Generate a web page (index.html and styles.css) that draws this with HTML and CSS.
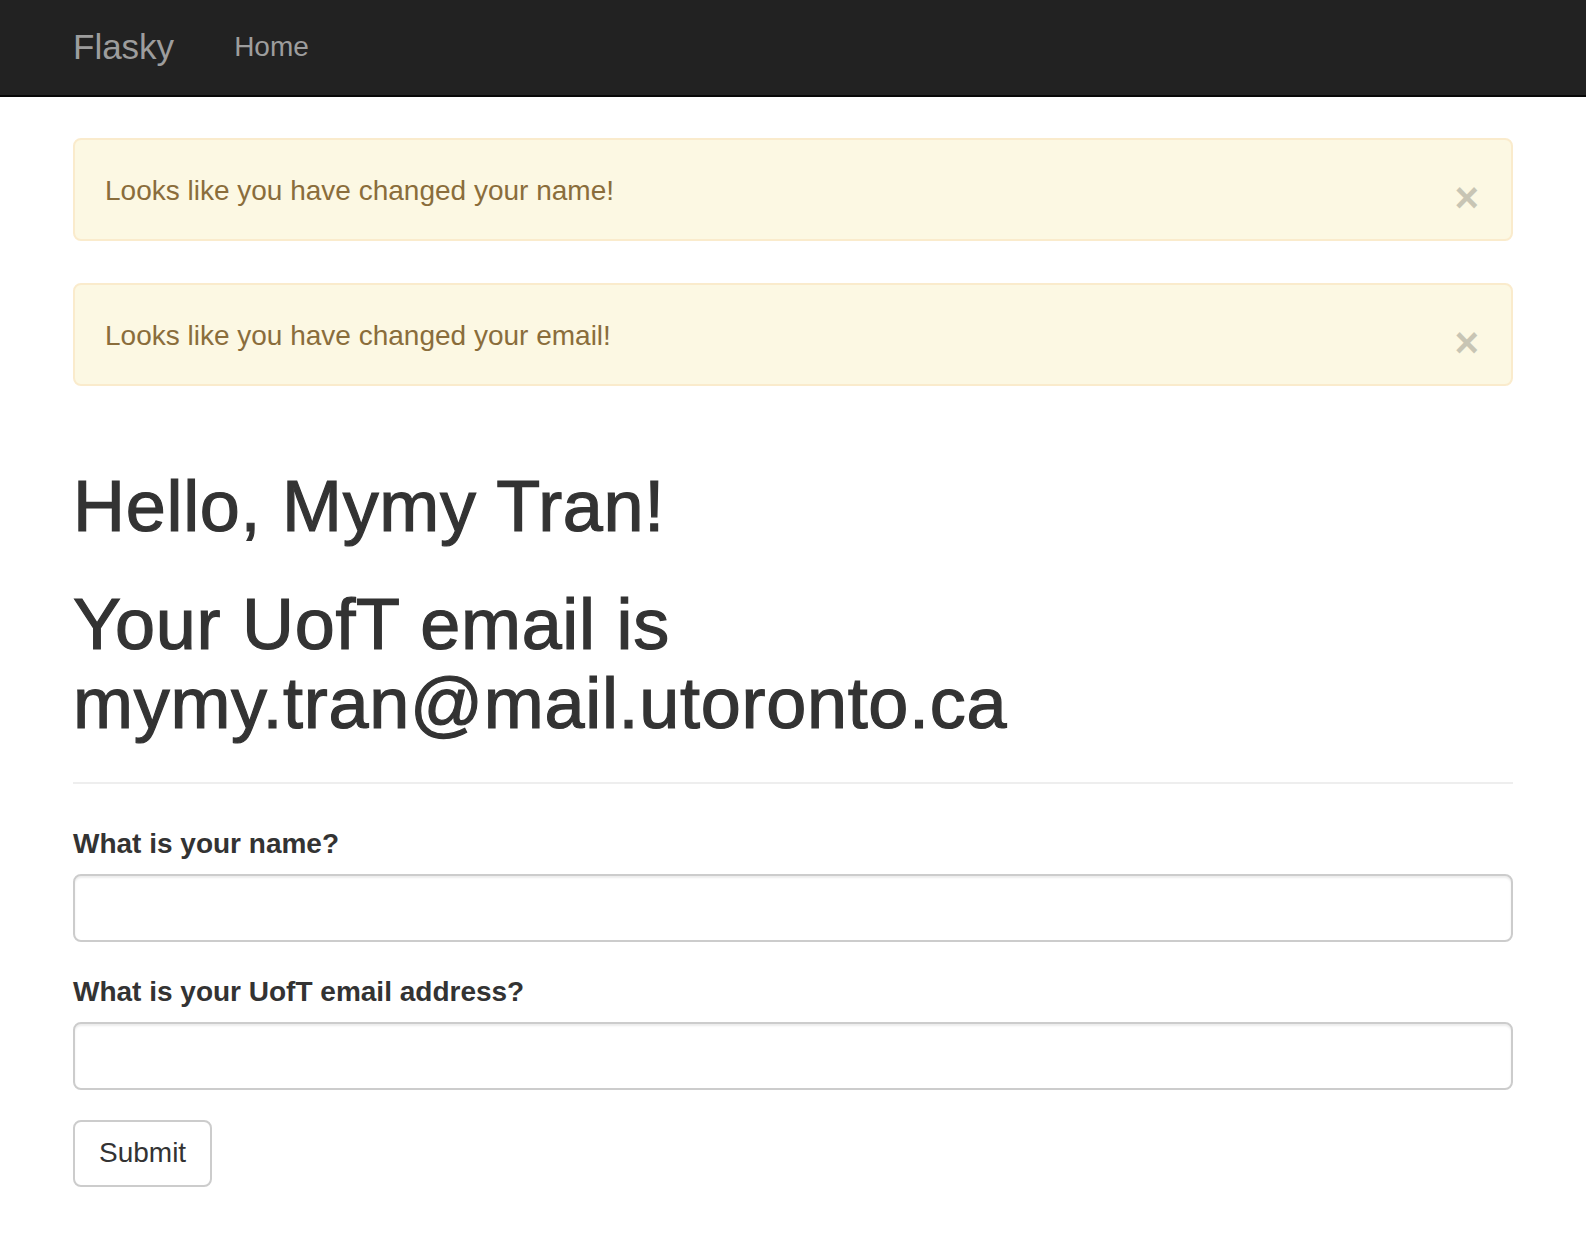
FILE: index.html
```
<!DOCTYPE html>
<html lang="en">
<head>
<meta charset="utf-8">
<title>Flasky</title>
<link rel="stylesheet" href="styles.css">
</head>
<body>
<nav class="navbar">
  <div class="container navbar-inner">
    <a class="navbar-brand" href="#">Flasky</a>
    <a class="nav-link" href="#">Home</a>
  </div>
</nav>
<main class="container">
  <div class="alert">
    <span class="alert-text">Looks like you have changed your name!</span>
    <button class="close" type="button">&times;</button>
  </div>
  <div class="alert">
    <span class="alert-text">Looks like you have changed your email!</span>
    <button class="close" type="button">&times;</button>
  </div>
  <div class="page-header">
    <h1>Hello, Mymy Tran!</h1>
    <h1>Your UofT email is mymy.tran@mail.utoronto.ca</h1>
  </div>
  <form class="form">
    <div class="form-group">
      <label class="control-label" for="name">What is your name?</label>
      <input class="form-control" id="name" type="text">
    </div>
    <div class="form-group">
      <label class="control-label" for="email">What is your UofT email address?</label>
      <input class="form-control" id="email" type="text">
    </div>
    <button class="btn" type="submit">Submit</button>
  </form>
</main>
</body>
</html>
```
FILE: styles.css
```
* { box-sizing: border-box; }
html, body { margin: 0; padding: 0; }
body {
  font-family: "Liberation Sans", Arial, Helvetica, sans-serif;
  font-size: 28px;
  line-height: 40px;
  color: #333;
  background: #fff;
}
.container {
  width: 1440px;
  margin: 0 auto;
}
.navbar {
  background: #222;
  height: 97px;
  border-bottom: 2px solid #080808;
  margin-bottom: 41px;
}
.navbar-inner {
  display: flex;
  align-items: flex-start;
  padding-top: 27px;
}
.navbar-brand {
  font-size: 35px;
  line-height: 40px;
  color: #9d9d9d;
  text-decoration: none;
  padding-right: 31px;
}
.nav-link {
  font-size: 28px;
  line-height: 40px;
  color: #9d9d9d;
  text-decoration: none;
  padding: 0 30px 0 29px;
}
.alert {
  display: flex;
  align-items: center;
  justify-content: space-between;
  background: #fcf8e3;
  border: 2px solid #faebcc;
  border-radius: 8px;
  color: #8a6d3b;
  padding: 31px 32px 28px 30px;
  margin-bottom: 42px;
}
.close {
  font-family: "Liberation Sans", Arial, sans-serif;
  font-size: 42px;
  font-weight: bold;
  line-height: 40px;
  height: 40px;
  color: #000;
  opacity: 0.2;
  background: none;
  border: 0;
  padding: 0;
  margin: 7px 0 -7px 0;
  cursor: pointer;
}
.page-header {
  margin-top: 81px;
  padding-bottom: 38px;
  border-bottom: 2px solid #eee;
  margin-bottom: 40px;
}
h1 {
  font-size: 72px;
  line-height: 79.2px;
  font-weight: normal;
  letter-spacing: 0.7px;
  color: #333;
  margin: 0;
  -webkit-text-stroke: 1.2px #333;
}
h1 + h1 {
  margin-top: 39px;
}
.form-group {
  margin-bottom: 30px;
}
.control-label {
  display: block;
  font-weight: bold;
  margin-bottom: 10px;
}
.form-control {
  display: block;
  width: 100%;
  height: 68px;
  border: 2px solid #ccc;
  border-radius: 8px;
  box-shadow: inset 0 2px 2px rgba(0,0,0,0.075);
  padding: 12px 24px;
  font-size: 28px;
  font-family: inherit;
  background: #fff;
}
.btn {
  display: block;
  height: 67px;
  padding: 0 24px;
  font-family: inherit;
  font-size: 28px;
  line-height: 40px;
  color: #333;
  background: #fff;
  border: 2px solid #ccc;
  border-radius: 8px;
}
```
